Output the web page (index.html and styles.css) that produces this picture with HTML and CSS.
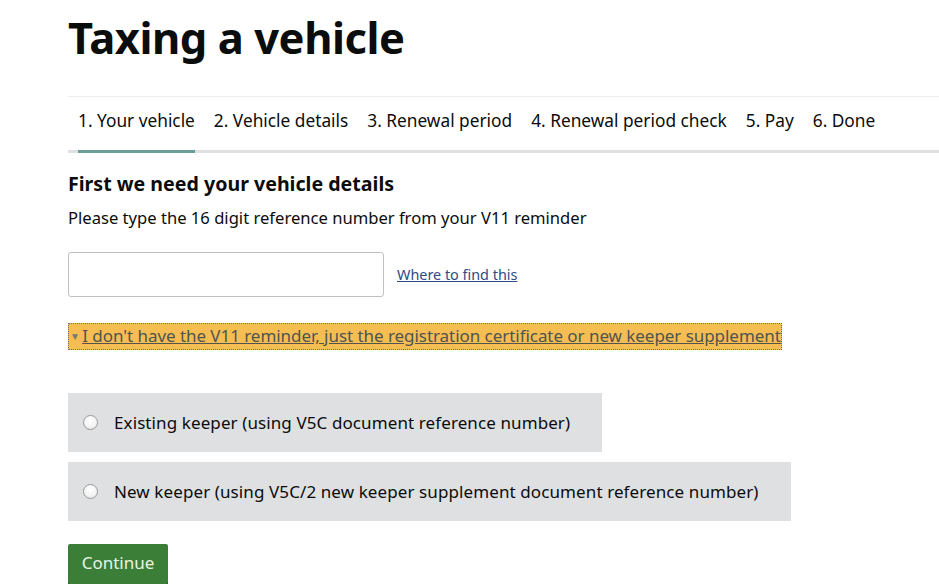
FILE: index.html
```html
<!DOCTYPE html>
<html lang="en">
<head>
<meta charset="utf-8">
<title>Taxing a vehicle</title>
<link rel="stylesheet" href="styles.css">
</head>
<body>
<main class="page">
  <h1 class="title">Taxing a vehicle</h1>
  <nav class="steps">
    <ol class="step-list">
      <li class="step active">1. Your vehicle</li>
      <li class="step">2. Vehicle details</li>
      <li class="step">3. Renewal period</li>
      <li class="step">4. Renewal period check</li>
      <li class="step">5. Pay</li>
      <li class="step">6. Done</li>
    </ol>
  </nav>
  <form class="form">
    <h2 class="heading">First we need your vehicle details</h2>
    <p class="hint">Please type the 16 digit reference number from your V11 reminder</p>
    <div class="ref-row">
      <input class="ref-input" type="text" aria-label="Reference number">
      <a class="help-link" href="#">Where to find this</a>
    </div>
    <div class="details-row">
      <span class="details-summary"><span class="arrow">&#9660;</span> <a href="#" class="summary-link">I don't have the V11 reminder, just the registration certificate or new keeper supplement</a></span>
    </div>
    <div class="options">
      <label class="option"><span class="radio"></span><span class="option-text">Existing keeper (using V5C document reference number)</span></label>
      <label class="option"><span class="radio"></span><span class="option-text">New keeper (using V5C/2 new keeper supplement document reference number)</span></label>
    </div>
    <button type="button" class="button">Continue</button>
  </form>
</main>
</body>
</html>
```
FILE: styles.css
```css
* { box-sizing: border-box; }
html, body { margin: 0; padding: 0; background: #fff; }
body {
  font-family: "Noto Sans", "Liberation Sans", Arial, sans-serif;
  color: #0b0c0c;
}
.page {
  padding-left: 68px;
}
.title {
  margin: 0;
  padding-top: 12px;
  font-size: 43.5px;
  line-height: 50px;
  font-weight: 700;
  letter-spacing: -0.45px;
}
.steps {
  margin-top: 34px;
  border-top: 1px solid #eeeeee;
  border-bottom: 3px solid #dee0e2;
}
.step-list {
  list-style: none;
  margin: 0;
  padding: 0 0 0 10px;
  display: flex;
  gap: 19px;
}
.step {
  font-size: 17.3px;
  line-height: 20px;
  padding: 14px 0 19px;
  margin-bottom: -3px;
  border-bottom: 3px solid transparent;
  color: #0b0c0c;
}
.step.active {
  border-bottom-color: #6a9e99;
}
.form {
  padding-top: 19px;
}
.heading {
  margin: 0;
  font-size: 19.6px;
  line-height: 24px;
  font-weight: 700;
}
.hint {
  margin: 12px 0 0;
  font-size: 16.6px;
  line-height: 20px;
}
.ref-row {
  margin-top: 24px;
  display: flex;
  align-items: center;
  gap: 13px;
}
.ref-input {
  width: 316px;
  height: 45px;
  border: 1px solid #bfc1c3;
  border-radius: 3px;
  background: #fff;
  font-size: 16px;
  padding: 0 8px;
}
.help-link {
  font-size: 14.4px;
  color: #2e4c86;
  text-decoration: underline;
}
.details-row {
  margin-top: 26px;
  display: flex;
}
.details-summary {
  display: inline-block;
  background: #f6bd53;
  outline: 1px dotted #6f6f6f;
  outline-offset: -1px;
  padding: 2px 1px 3px 1px;
  font-size: 17px;
  line-height: 21px;
  color: #555;
  white-space: nowrap;
  letter-spacing: -0.05px;
}
.arrow {
  font-size: 10px;
  color: #7a7a72;
  vertical-align: 2px;
  margin-left: 1px;
  margin-right: -2px;
}
.summary-link {
  color: #4f554f;
  text-decoration: underline;
}
.options {
  margin-top: 43px;
  display: flex;
  flex-direction: column;
  align-items: flex-start;
  gap: 10px;
}
.option {
  display: flex;
  align-items: center;
  background: #dee0e2;
  height: 59px;
  padding: 0 32px 0 15px;
  font-size: 17px;
  color: #0b0c0c;
}
.radio {
  width: 15px;
  height: 15px;
  border-radius: 50%;
  border: 1px solid #9a9a9a;
  background: radial-gradient(circle at 50% 35%, #ffffff 0%, #f3f3f3 60%, #dcdcdc 100%);
  margin-right: 16px;
  flex: none;
}
.option-text {
  letter-spacing: 0.1px;
}
.button {
  margin-top: 23px;
  display: block;
  height: 40px;
  width: 100px;
  border: 0;
  border-radius: 2px;
  background: #3b7e38;
  box-shadow: 0 2px 0 #1f4a1e;
  color: #e8f5e4;
  font-family: "Noto Sans", "Liberation Sans", Arial, sans-serif;
  font-size: 17px;
  line-height: 38px;
  padding: 0 0 2px;
}
```
